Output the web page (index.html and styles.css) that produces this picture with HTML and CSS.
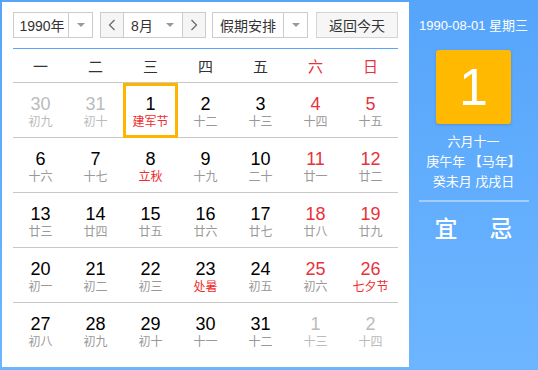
FILE: index.html
```html
<!DOCTYPE html>
<html lang="zh-CN">
<head>
<meta charset="utf-8">
<link rel="stylesheet" href="styles.css">
</head>
<body>
<div class="app">
  <div class="main">
    <div class="toolbar">
      <div class="sel sel-year"><span class="sel-text">1990年</span><span class="sel-arrow"><i class="tri"></i></span></div>
      <div class="sel sel-month">
        <span class="nav"><svg width="8" height="12" viewBox="0 0 8 12"><polyline points="6.5,1 1.5,6 6.5,11" fill="none" stroke="#666" stroke-width="1.2"/></svg></span>
        <span class="sel-text">8月</span>
        <span class="sel-arrow plain"><i class="tri"></i></span>
        <span class="nav nav-r"><svg width="8" height="12" viewBox="0 0 8 12"><polyline points="1.5,1 6.5,6 1.5,11" fill="none" stroke="#666" stroke-width="1.2"/></svg></span>
      </div>
      <div class="sel sel-holiday"><span class="sel-text">假期安排</span><span class="sel-arrow"><i class="tri"></i></span></div>
      <div class="btn-today">返回今天</div>
    </div>
    <div class="grid">
      <div class="wk">一</div><div class="wk">二</div><div class="wk">三</div><div class="wk">四</div><div class="wk">五</div><div class="wk red">六</div><div class="wk red">日</div>

      <div class="cell other"><b>30</b><span>初九</span></div>
      <div class="cell other"><b>31</b><span>初十</span></div>
      <div class="cell selected"><b>1</b><span class="fest">建军节</span></div>
      <div class="cell"><b>2</b><span>十二</span></div>
      <div class="cell"><b>3</b><span>十三</span></div>
      <div class="cell wkend"><b>4</b><span>十四</span></div>
      <div class="cell wkend"><b>5</b><span>十五</span></div>

      <div class="cell"><b>6</b><span>十六</span></div>
      <div class="cell"><b>7</b><span>十七</span></div>
      <div class="cell"><b>8</b><span class="fest">立秋</span></div>
      <div class="cell"><b>9</b><span>十九</span></div>
      <div class="cell"><b>10</b><span>二十</span></div>
      <div class="cell wkend"><b>11</b><span>廿一</span></div>
      <div class="cell wkend"><b>12</b><span>廿二</span></div>

      <div class="cell"><b>13</b><span>廿三</span></div>
      <div class="cell"><b>14</b><span>廿四</span></div>
      <div class="cell"><b>15</b><span>廿五</span></div>
      <div class="cell"><b>16</b><span>廿六</span></div>
      <div class="cell"><b>17</b><span>廿七</span></div>
      <div class="cell wkend"><b>18</b><span>廿八</span></div>
      <div class="cell wkend"><b>19</b><span>廿九</span></div>

      <div class="cell"><b>20</b><span>初一</span></div>
      <div class="cell"><b>21</b><span>初二</span></div>
      <div class="cell"><b>22</b><span>初三</span></div>
      <div class="cell"><b>23</b><span class="fest">处暑</span></div>
      <div class="cell"><b>24</b><span>初五</span></div>
      <div class="cell wkend"><b>25</b><span>初六</span></div>
      <div class="cell wkend"><b>26</b><span class="fest">七夕节</span></div>

      <div class="cell last"><b>27</b><span>初八</span></div>
      <div class="cell last"><b>28</b><span>初九</span></div>
      <div class="cell last"><b>29</b><span>初十</span></div>
      <div class="cell last"><b>30</b><span>十一</span></div>
      <div class="cell last"><b>31</b><span>十二</span></div>
      <div class="cell last other"><b>1</b><span>十三</span></div>
      <div class="cell last other"><b>2</b><span>十四</span></div>
    </div>
  </div>
  <div class="side">
    <div class="side-date">1990-08-01 星期三</div>
    <div class="big-day">1</div>
    <div class="lunar">
      <div>六月十一</div>
      <div>庚午年 【马年】</div>
      <div>癸未月 戊戌日</div>
    </div>
    <div class="side-sep"></div>
    <div class="yiji"><span>宜</span><span>忌</span></div>
  </div>
</div>
</body>
</html>
```

FILE: styles.css
```css
html, body {
  margin: 0;
  padding: 0;
}
body {
  font-family: "Liberation Sans", "Noto Sans CJK SC", sans-serif;
  color: #333;
}
.app {
  width: 538px;
  height: 370px;
  display: flex;
  background: linear-gradient(180deg, #56a5fb 0%, #6db5ff 100%);
  overflow: hidden;
}
.main {
  width: 407px;
  height: 365px;
  margin: 2px 0 0 2px;
  background: #fff;
  box-sizing: border-box;
  padding: 10px 11px 0 11px;
}
.toolbar {
  display: flex;
  height: 26px;
  font-size: 14px;
}
.sel {
  display: flex;
  align-items: stretch;
  border: 1px solid #ccc;
  box-sizing: border-box;
  height: 26px;
  background: #fff;
}
.sel-text {
  display: flex;
  align-items: center;
  justify-content: center;
  flex: 1;
  color: #333;
}
.sel-arrow {
  width: 23px;
  border-left: 1px solid #ccc;
  display: flex;
  align-items: center;
  justify-content: center;
}
.sel-arrow.plain {
  border-left: none;
  width: 24px;
}
.tri {
  width: 0;
  height: 0;
  border-left: 4px solid transparent;
  border-right: 4px solid transparent;
  border-top: 4px solid #999;
}
.sel-year {
  width: 80px;
}
.sel-year .sel-text {
  padding-left: 2px;
}
.sel-month {
  width: 106px;
  margin-left: 7px;
}
.nav {
  width: 22px;
  background: #f5f5f5;
  display: flex;
  align-items: center;
  justify-content: center;
  border-right: 1px solid #ccc;
}
.nav-r {
  border-right: none;
  border-left: 1px solid #ccc;
}
.sel-month .sel-text {
  padding-left: 2px;
}
.sel-holiday {
  width: 96px;
  margin-left: 6px;
}
.btn-today {
  margin-left: auto;
  width: 82px;
  height: 26px;
  box-sizing: border-box;
  border: 1px solid #d4d4d4;
  background: #f6f6f6;
  display: flex;
  align-items: center;
  justify-content: center;
  color: #333;
}
.grid {
  margin-top: 10px;
  border-top: 1px solid #5aa6fb;
  display: grid;
  grid-template-columns: repeat(7, 1fr);
}
.wk {
  height: 33px;
  line-height: 35px;
  text-align: center;
  font-size: 15px;
  color: #333;
  border-bottom: 1px solid #c8c8c8;
}
.wk.red {
  color: #e8323c;
}
.cell {
  height: 55px;
  box-sizing: border-box;
  border-bottom: 1px solid #c8c8c8;
  display: flex;
  flex-direction: column;
  align-items: center;
  padding-top: 11px;
}
.cell.last {
  border-bottom: none;
}
.cell b {
  font-weight: normal;
  font-size: 18px;
  line-height: 20px;
  color: #000;
}
.cell span {
  font-size: 12px;
  line-height: 16px;
  color: #999;
}
.cell.wkend b {
  color: #e8323c;
}
.cell.other b,
.cell.other span {
  color: #bbb;
}
.cell span.fest {
  color: #f02b2b;
}
.cell.selected {
  border: 3px solid #ffb400;
  padding-top: 8px;
  height: 55px;
}
.side {
  flex: 1;
  display: flex;
  flex-direction: column;
  align-items: center;
  color: #fff;
}
.side-date {
  margin-top: 17px;
  font-size: 13px;
  line-height: 18px;
}
.big-day {
  margin-top: 15px;
  width: 75px;
  height: 74px;
  border-radius: 3px;
  background: #ffb900;
  box-shadow: 0 1px 3px rgba(0, 0, 0, 0.15);
  color: #fff;
  font-size: 52px;
  line-height: 74px;
  text-align: center;
}
.lunar {
  margin-top: 8px;
  font-size: 13px;
  line-height: 20px;
  text-align: center;
}
.side-sep {
  margin-top: 8px;
  width: 110px;
  height: 2px;
  background: rgba(255, 255, 255, 0.4);
}
.yiji {
  margin-top: 14px;
  display: flex;
  gap: 32px;
  font-size: 23px;
  line-height: 26px;
  font-weight: 500;
}
```
